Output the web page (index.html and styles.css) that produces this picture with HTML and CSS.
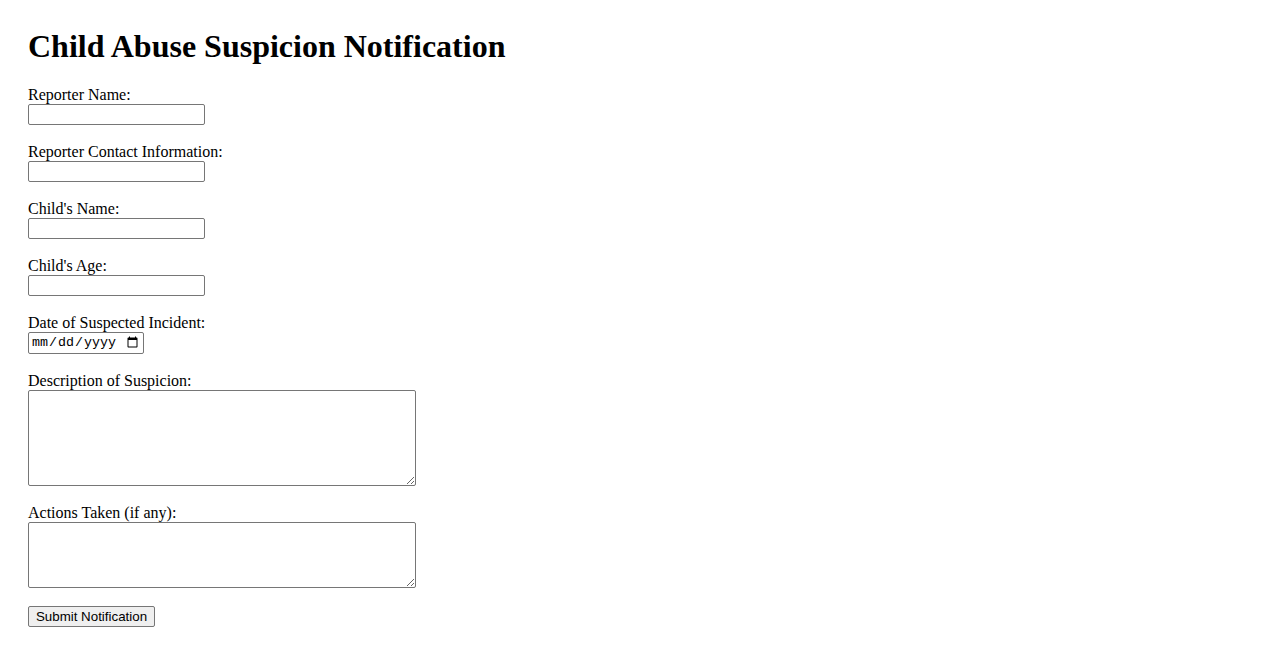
FILE: index.html
```html
<!DOCTYPE html>
<html lang="en">
<head>
    <meta charset="UTF-8">
    <title>Child Abuse Suspicion Notification</title>
    <link rel="stylesheet" href="styles.css">
</head>
<body>
    <div class="container">
        <h1>Child Abuse Suspicion Notification</h1>
        <form id="notificationForm">
            <label for="reporterName">Reporter Name:</label><br>
            <input type="text" id="reporterName" class="field"><br><br>

            <label for="reporterContact">Reporter Contact Information:</label><br>
            <input type="text" id="reporterContact" class="field"><br><br>

            <label for="childName">Child's Name:</label><br>
            <input type="text" id="childName" class="field"><br><br>

            <label for="childAge">Child's Age:</label><br>
            <input type="text" id="childAge" class="field"><br><br>

            <label for="incidentDate">Date of Suspected Incident:</label><br>
            <input type="date" id="incidentDate" class="date-field"><br><br>

            <label for="description">Description of Suspicion:</label><br>
            <textarea id="description" class="area area-tall"></textarea><br><br>

            <label for="actions">Actions Taken (if any):</label><br>
            <textarea id="actions" class="area area-short"></textarea><br><br>

            <button type="submit" class="submit">Submit Notification</button>
        </form>
    </div>
</body>
</html>
```

FILE: styles.css
```css
body {
    margin: 8px;
    font-family: "Liberation Serif", "Times New Roman", serif;
    font-size: 16px;
    color: #000;
    background-color: #fff;
}
.container {
    padding: 20px;
}
h1 {
    margin: 0 0 21px 0;
    font-size: 32px;
    font-weight: bold;
}
.field {
    box-sizing: border-box;
    width: 177px;
    height: 21px;
    border: 1px solid #767676;
    border-radius: 2px;
    padding: 1px 2px;
    font-family: "Liberation Sans", Arial, sans-serif;
    font-size: 13.33px;
}
.date-field {
    box-sizing: border-box;
    width: 116px;
    height: 22px;
    border: 1px solid #767676;
    border-radius: 2px;
    padding: 1px 2px;
    font-family: "Liberation Mono", "Courier New", monospace;
    font-size: 13.33px;
}
.area {
    box-sizing: border-box;
    width: 388px;
    border: 1px solid #767676;
    border-radius: 2px;
    padding: 2px;
    font-family: "Liberation Mono", "Courier New", monospace;
    font-size: 13.33px;
    vertical-align: bottom;
}
.area-tall {
    height: 96px;
}
.area-short {
    height: 66px;
}
.submit {
    box-sizing: border-box;
    width: 127px;
    height: 21px;
    padding: 1px 6px;
    font-family: "Liberation Sans", Arial, sans-serif;
    font-size: 13.33px;
    color: #000;
    background-color: #efefef;
    border: 1px solid #767676;
    border-radius: 2px;
}
```
